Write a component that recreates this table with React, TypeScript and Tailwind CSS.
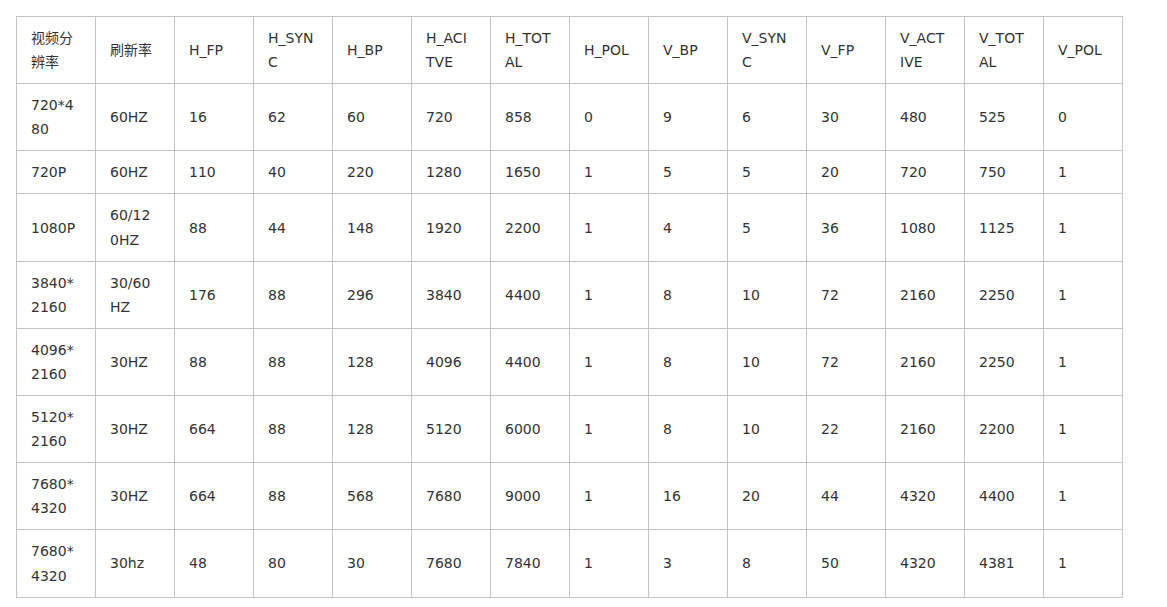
const headers = ['视频分辨率', '刷新率', 'H_FP', 'H_SYNC', 'H_BP', 'H_ACITVE', 'H_TOTAL', 'H_POL', 'V_BP', 'V_SYNC', 'V_FP', 'V_ACTIVE', 'V_TOTAL', 'V_POL'];

const rows = [
  ['720*480', '60HZ', '16', '62', '60', '720', '858', '0', '9', '6', '30', '480', '525', '0'],
  ['720P', '60HZ', '110', '40', '220', '1280', '1650', '1', '5', '5', '20', '720', '750', '1'],
  ['1080P', '60/120HZ', '88', '44', '148', '1920', '2200', '1', '4', '5', '36', '1080', '1125', '1'],
  ['3840*2160', '30/60HZ', '176', '88', '296', '3840', '4400', '1', '8', '10', '72', '2160', '2250', '1'],
  ['4096*2160', '30HZ', '88', '88', '128', '4096', '4400', '1', '8', '10', '72', '2160', '2250', '1'],
  ['5120*2160', '30HZ', '664', '88', '128', '5120', '6000', '1', '8', '10', '22', '2160', '2200', '1'],
  ['7680*4320', '30HZ', '664', '88', '568', '7680', '9000', '1', '16', '20', '44', '4320', '4400', '1'],
  ['7680*4320', '30hz', '48', '80', '30', '7680', '7840', '1', '3', '8', '50', '4320', '4381', '1'],
];

export default function App() {
  return (
    <div className="min-h-screen bg-white p-4 font-['DejaVu_Sans','Noto_Sans_CJK_SC',sans-serif] text-[14px] leading-[24.1px] text-[#333]">
      <table className="w-[1107px] table-fixed border-collapse">
        <colgroup>
          {headers.map((h) => (
            <col key={h} className="w-[79px]" />
          ))}
        </colgroup>
        <thead>
          <tr>
            {headers.map((h) => (
              <th
                key={h}
                className="border border-[#c4c4c4] py-[9px] pl-[14px] pr-[17px] text-left align-middle font-normal break-all"
              >
                {h}
              </th>
            ))}
          </tr>
        </thead>
        <tbody>
          {rows.map((row, i) => (
            <tr key={i}>
              {row.map((cell, j) => (
                <td
                  key={j}
                  className="border border-[#c4c4c4] py-[9px] pl-[14px] pr-[17px] align-middle break-all"
                >
                  {cell}
                </td>
              ))}
            </tr>
          ))}
        </tbody>
      </table>
    </div>
  );
}
